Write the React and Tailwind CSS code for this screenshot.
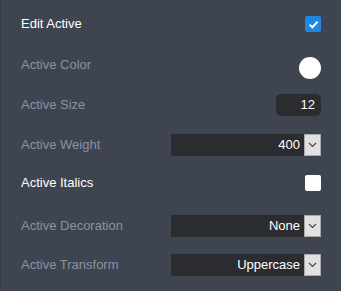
import { useState } from 'react'

const font = { fontFamily: '"Liberation Sans", Arial, sans-serif' }

function Chevron() {
  return (
    <svg width="9" height="6" viewBox="0 0 9 6" fill="none">
      <path d="M1 1l3.5 3.5L8 1" stroke="#444" strokeWidth="1.1" />
    </svg>
  )
}

function Select({ value }) {
  return (
    <div className="flex h-[22px] w-[150px] bg-[#2b2c30]">
      <span className="flex-1 pr-[4px] text-right text-[13px] leading-[22px] text-white">{value}</span>
      <span className="flex w-[17px] items-center justify-center border border-[#a9a9a9] bg-[#e1e1e1]">
        <Chevron />
      </span>
    </div>
  )
}

function Checkbox({ checked, onToggle }) {
  if (checked) {
    return (
      <button onClick={onToggle} className="flex h-4 w-4 items-center justify-center rounded-[2px] bg-[#1f87e3]">
        <svg width="11" height="9" viewBox="0 0 11 9" fill="none">
          <path d="M1.5 4.6l2.8 2.7L9.6 1.6" stroke="white" strokeWidth="2" />
        </svg>
      </button>
    )
  }
  return <button onClick={onToggle} className="h-4 w-4 rounded-[2px] bg-white" />
}

function Row({ label, bright, h, children }) {
  return (
    <div className={`flex items-center justify-between ${h}`}>
      <span className={`text-[13px] ${bright ? 'text-white' : 'text-[#8a92a1]'}`}>{label}</span>
      {children}
    </div>
  )
}

export default function App() {
  const [edit, setEdit] = useState(true)
  const [italics, setItalics] = useState(false)

  return (
    <div style={font} className="h-[291px] w-[341px] border-l border-[#373b47] bg-[#3f4451] pl-[20px] pr-[20px] pt-[4px]">
      <Row label="Edit Active" bright h="h-[40px]">
        <Checkbox checked={edit} onToggle={() => setEdit(!edit)} />
      </Row>
      <Row label="Active Color" h="h-[42px]">
        <span className="mt-[5px] h-[22px] w-[22px] rounded-full bg-white" />
      </Row>
      <Row label="Active Size" h="h-[38px]">
        <span className="h-[22px] w-[45px] rounded-[5px] bg-[#2b2c30] pr-[6px] text-right text-[13px] leading-[22px] text-white">12</span>
      </Row>
      <Row label="Active Weight" h="h-[42px]">
        <Select value="400" />
      </Row>
      <Row label="Active Italics" bright h="h-[34px]">
        <Checkbox checked={italics} onToggle={() => setItalics(!italics)} />
      </Row>
      <Row label="Active Decoration" h="h-[52px]">
        <Select value="None" />
      </Row>
      <Row label="Active Transform" h="h-[26px]">
        <Select value="Uppercase" />
      </Row>
    </div>
  )
}
